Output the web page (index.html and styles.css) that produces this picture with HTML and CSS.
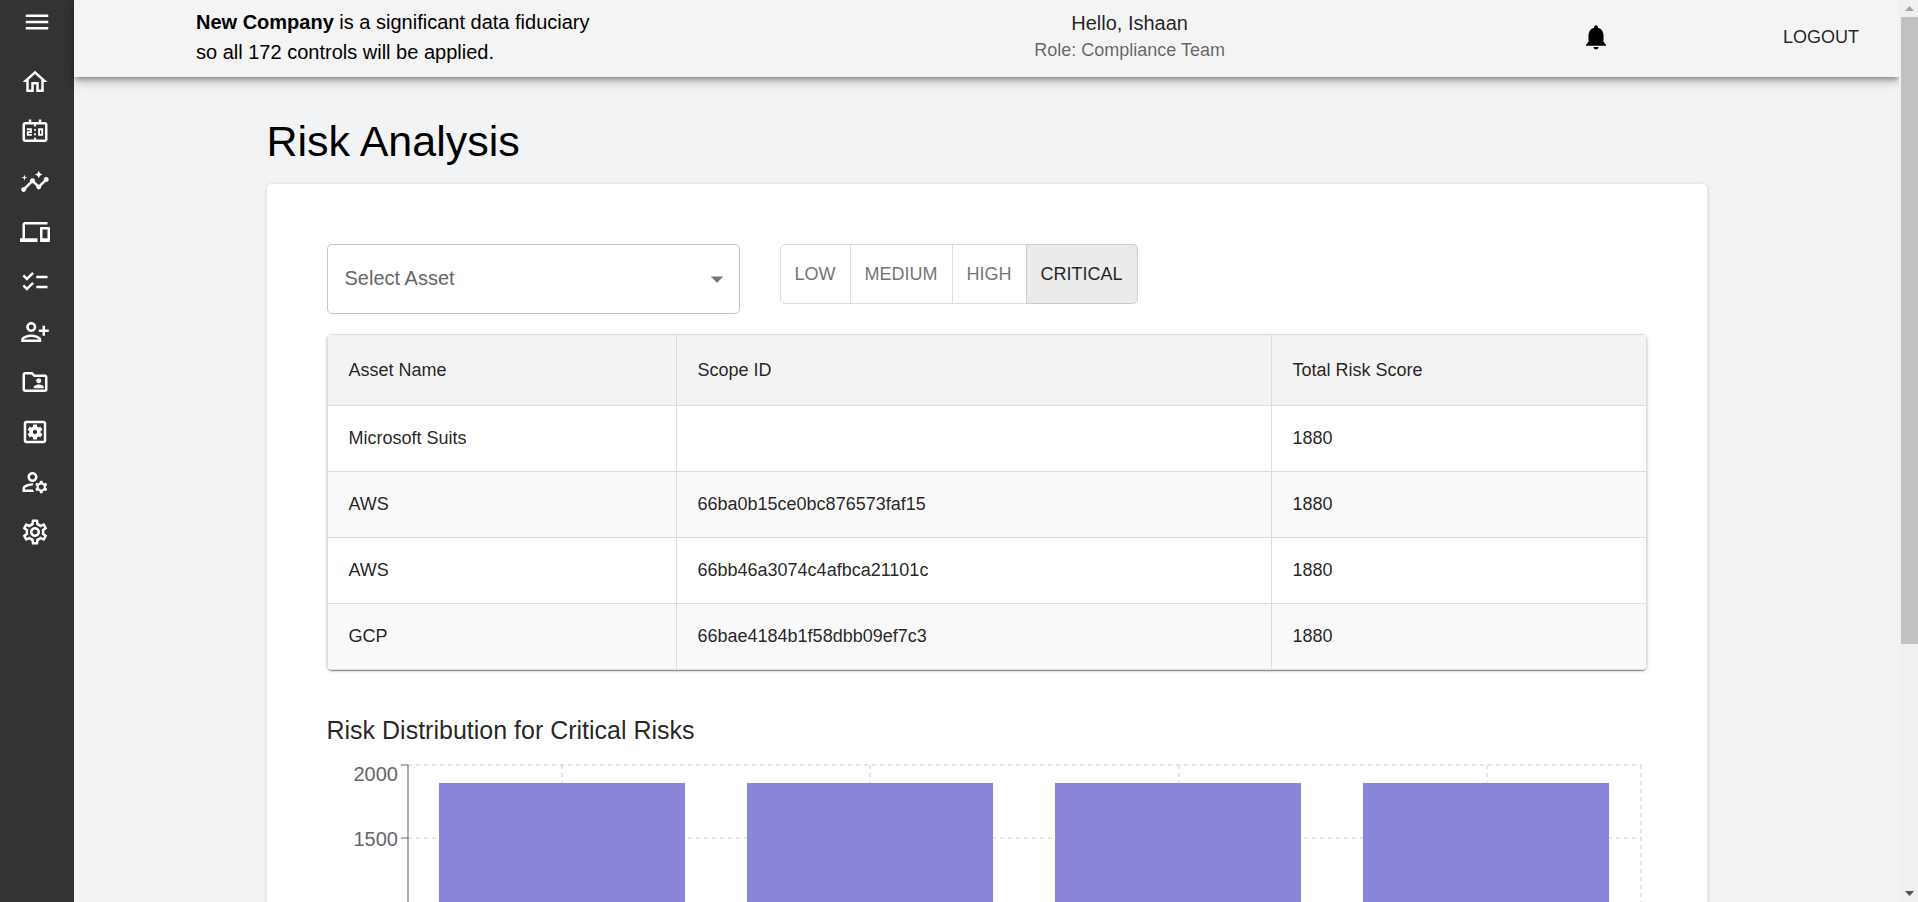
FILE: index.html
```html
<!DOCTYPE html>
<html lang="en">
<head>
<meta charset="utf-8">
<title>Risk Analysis</title>
<link rel="stylesheet" href="styles.css">
</head>
<body>
<div class="app">
  <nav class="sidebar">
    <button class="menu-button" type="button"><svg class="icon" viewBox="0 0 24 24"><path d="M3 18h18v-2H3v2zm0-5h18v-2H3v2zm0-7v2h18V6H3z"/></svg></button>
    <a class="nav-link" href="#"><svg class="icon" viewBox="0 0 24 24"><path d="M12 5.69l5 4.5V18h-2v-6H9v6H7v-7.81l5-4.5M12 3L2 12h3v8h6v-6h2v6h6v-8h3L12 3z"/></svg></a>
    <a class="nav-link" href="#"><svg class="icon" viewBox="0 0 24 24"><path fill-rule="evenodd" d="M20 4h-3V2h-2v2H9V2H7v2H4c-1.1 0-2 .9-2 2v12c0 1.1.9 2 2 2h16c1.1 0 2-.9 2-2V6c0-1.1-.9-2-2-2zM20 18h-7.25v-1.5h-1.500V18H4V6h7.250v1.500h1.500V6H20v12z"/><path fill-rule="evenodd" d="M5.500 9H9.500v3.700H7v.8h2.500V15h-4v-3.700H8v-.8H5.500zM14.500 9h4v6h-4zM16 10.500v3h1v-3zM11.250 9.500h1.500V11h-1.500zM11.250 13h1.500v1.500h-1.500z"/></svg></a>
    <a class="nav-link" href="#"><svg class="icon" viewBox="0 0 24 24"><path d="M21 8c-1.45 0-2.26 1.44-1.93 2.51l-3.55 3.56c-.3-.09-.74-.09-1.04 0l-2.55-2.55C12.27 10.45 11.46 9 10 9c-1.45 0-2.27 1.44-1.93 2.52l-4.56 4.55C2.44 15.74 1 16.55 1 18c0 1.1.9 2 2 2 1.45 0 2.26-1.44 1.93-2.51l4.55-4.56c.3.09.74.09 1.04 0l2.55 2.55C12.73 16.55 13.54 18 15 18c1.45 0 2.27-1.44 1.93-2.52l3.56-3.55c1.07.33 2.51-.48 2.51-1.93 0-1.1-.9-2-2-2z"/><path d="M15 9l.94-2.07L18 6l-2.06-.93L15 3l-.92 2.07L12 6l2.08.93zM3.5 11L4 9l2-.5L4 8l-.5-2L3 8l-2 .5L3 9z"/></svg></a>
    <a class="nav-link" href="#"><svg class="icon" viewBox="0 0 24 24"><path d="M4 6h18V4H4c-1.1 0-2 .9-2 2v11H0v3h14v-3H4V6zm19 2h-6c-.55 0-1 .45-1 1v10c0 .55.45 1 1 1h6c.55 0 1-.45 1-1V9c0-.55-.45-1-1-1zm-1 9h-4v-7h4v7z"/></svg></a>
    <a class="nav-link" href="#"><svg class="icon" viewBox="0 0 24 24"><path d="M22 7h-9v2h9V7zm0 8h-9v2h9v-2zM5.54 11L2 7.46l1.41-1.41 2.12 2.12 4.24-4.24 1.41 1.41L5.54 11zm0 8L2 15.46l1.41-1.41 2.12 2.12 4.24-4.24 1.41 1.41L5.54 19z"/></svg></a>
    <a class="nav-link" href="#"><svg class="icon" viewBox="0 0 24 24"><path d="M13 8c0-2.21-1.79-4-4-4S5 5.79 5 8s1.79 4 4 4 4-1.79 4-4zm-2 0c0 1.1-.9 2-2 2s-2-.9-2-2 .9-2 2-2 2 .9 2 2zM1 18v2h16v-2c0-2.66-5.33-4-8-4s-8 1.34-8 4zm2 0c.2-.71 3.3-2 6-2 2.69 0 5.78 1.28 6 2H3zm17-3v-3h3v-2h-3V7h-2v3h-3v2h3v3h2z"/></svg></a>
    <a class="nav-link" href="#"><svg class="icon" viewBox="0 0 24 24"><path d="M20 6h-8l-2-2H4c-1.1 0-1.99.9-1.99 2L2 18c0 1.1.9 2 2 2h16c1.1 0 2-.9 2-2V8c0-1.1-.9-2-2-2zm0 12H4V6h5.17l2 2H20v10zm-5-5c1.1 0 2-.9 2-2s-.9-2-2-2-2 .9-2 2 .9 2 2 2zm-4 4h8v-1c0-1.33-2.67-2-4-2s-4 .67-4 2v1z"/></svg></a>
    <a class="nav-link" href="#"><svg class="icon" viewBox="0 0 24 24"><path d="M19 3H5c-1.11 0-2 .9-2 2v14c0 1.1.89 2 2 2h14c1.11 0 2-.9 2-2V5c0-1.1-.89-2-2-2zm0 16H5V5h14v14z"/><path fill-rule="evenodd" d="M6.21 13.97l1.2 2.07c.08.13.23.18.37.13l1.49-.6c.31.24.64.44 1.01.59l.22 1.59c.03.14.16.25.31.25h2.4c.15 0 .27-.11.3-.26l.22-1.59c.36-.15.7-.35 1.01-.59l1.49.6c.14.05.29 0 .37-.13l1.2-2.07c.08-.13.04-.29-.07-.39l-1.27-.99c.03-.19.04-.39.04-.58 0-.2-.02-.39-.04-.59l1.27-.99c.11-.09.15-.26.07-.39l-1.2-2.07c-.08-.13-.23-.18-.37-.13l-1.49.6c-.31-.24-.64-.44-1.01-.59l-.22-1.59C13.47 6.11 13.35 6 13.2 6h-2.4c-.15 0-.27.11-.3.26l-.22 1.59c-.36.15-.71.34-1.01.58l-1.49-.6c-.14-.05-.29 0-.37.13l-1.2 2.07c-.08.13-.04.29.07.39l1.27.99c-.03.2-.05.39-.05.59 0 .2.02.39.04.59l-1.27.99c-.11.1-.14.26-.06.39zM12 10.29c.94 0 1.71.77 1.71 1.71s-.77 1.71-1.71 1.71-1.71-.77-1.71-1.71.77-1.71 1.71-1.71z"/></svg></a>
    <a class="nav-link" href="#"><svg class="icon" viewBox="0 0 24 24"><path fill-rule="evenodd" d="M4 18v-.65c0-.34.16-.66.41-.81C6.1 15.53 8.03 15 10 15c.03 0 .05 0 .08.01.1-.7.3-1.37.59-1.98-.22-.02-.44-.03-.67-.03-2.42 0-4.68.67-6.61 1.82-.88.52-1.39 1.5-1.39 2.53V20h9.26c-.42-.6-.75-1.28-.97-2H4zM10 12c2.21 0 4-1.79 4-4s-1.79-4-4-4-4 1.79-4 4 1.79 4 4 4zm0-6c1.1 0 2 .9 2 2s-.9 2-2 2-2-.9-2-2 .9-2 2-2zM20.75 16c0-.22-.03-.42-.06-.63l1.14-1.01-1-1.73-1.45.49c-.32-.27-.68-.48-1.08-.63L18 11h-2l-.3 1.49c-.4.15-.76.36-1.08.63l-1.45-.49-1 1.73 1.14 1.01c-.03.21-.06.41-.06.63s.03.42.06.63l-1.14 1.01 1 1.73 1.45-.49c.32.27.68.48 1.08.63L16 21h2l.3-1.49c.4-.15.76-.36 1.08-.63l1.45.49 1-1.73-1.14-1.01c.03-.21.06-.41.06-.63zM17 18c-1.1 0-2-.9-2-2s.9-2 2-2 2 .9 2 2-.9 2-2 2z"/></svg></a>
    <a class="nav-link" href="#"><svg class="icon" viewBox="0 0 24 24"><path d="M19.43 12.98c.04-.32.07-.64.07-.98 0-.34-.03-.66-.07-.98l2.11-1.65c.19-.15.24-.42.12-.64l-2-3.46c-.09-.16-.26-.25-.44-.25-.06 0-.12.01-.17.03l-2.49 1c-.52-.4-1.08-.73-1.69-.98l-.38-2.65C14.46 2.18 14.25 2 14 2h-4c-.25 0-.46.18-.49.42l-.38 2.65c-.61.25-1.17.59-1.69.98l-2.49-1c-.06-.02-.12-.03-.18-.03-.17 0-.34.09-.43.25l-2 3.46c-.13.22-.07.49.12.64l2.11 1.65c-.04.32-.07.65-.07.98 0 .33.03.66.07.98l-2.11 1.65c-.19.15-.24.42-.12.64l2 3.46c.09.16.26.25.44.25.06 0 .12-.01.17-.03l2.49-1c.52.4 1.08.73 1.69.98l.38 2.65c.03.24.24.42.49.42h4c.25 0 .46-.18.49-.42l.38-2.65c.61-.25 1.17-.59 1.69-.98l2.49 1c.06.02.12.03.18.03.17 0 .34-.09.43-.25l2-3.46c.12-.22.07-.49-.12-.64l-2.11-1.65zm-1.98-1.71c.04.31.05.52.05.73 0 .21-.02.43-.05.73l-.14 1.13.89.7 1.08.84-.7 1.21-1.27-.51-1.04-.42-.9.68c-.43.32-.84.56-1.25.73l-1.06.43-.16 1.13-.2 1.35h-1.4l-.19-1.35-.16-1.13-1.06-.43c-.43-.18-.83-.41-1.23-.71l-.91-.7-1.06.43-1.27.51-.7-1.21 1.08-.84.89-.7-.14-1.13c-.03-.31-.05-.54-.05-.74s.02-.43.05-.73l.14-1.13-.89-.7-1.08-.84.7-1.21 1.27.51 1.04.42.9-.68c.43-.32.84-.56 1.25-.73l1.06-.43.16-1.13.2-1.35h1.39l.19 1.35.16 1.13 1.06.43c.43.18.83.41 1.23.71l.91.7 1.06-.43 1.27-.51.7 1.21-1.07.85-.89.7.14 1.13zM12 8c-2.21 0-4 1.79-4 4s1.79 4 4 4 4-1.79 4-4-1.79-4-4-4zm0 6c-1.1 0-2-.9-2-2s.9-2 2-2 2 .9 2 2-.9 2-2 2z"/></svg></a>
  </nav>

  <div class="page">
    <header class="topbar">
      <p class="notice"><strong>New Company</strong> is a significant data fiduciary<br>so all 172 controls will be applied.</p>
      <div class="user">
        <p class="user-name">Hello, Ishaan</p>
        <p class="user-role">Role: Compliance Team</p>
      </div>
      <button class="bell" type="button"><svg class="icon" viewBox="0 0 24 24"><path d="M12 22c1.1 0 2-.9 2-2h-4c0 1.1.89 2 2 2zm6-6v-5c0-3.07-1.64-5.64-4.5-6.32V4c0-.83-.67-1.5-1.5-1.5s-1.5.67-1.5 1.5v.68C7.63 5.36 6 7.92 6 11v5l-2 2v1h16v-1l-2-2z"/></svg></button>
      <button class="logout" type="button">LOGOUT</button>
    </header>

    <main class="content">
      <h1 class="title">Risk Analysis</h1>
      <section class="card">
        <div class="filters">
          <label class="asset-field">
            <select class="asset-select"><option>Select Asset</option></select>
            <svg class="asset-arrow" viewBox="0 0 24 24"><path d="M7 10l5 5 5-5z"/></svg>
          </label>
          <div class="levels">
            <button class="level" type="button">LOW</button>
            <button class="level" type="button">MEDIUM</button>
            <button class="level" type="button">HIGH</button>
            <button class="level level-active" type="button">CRITICAL</button>
          </div>
        </div>

        <div class="table-frame">
          <table class="risk-table">
            <colgroup><col class="col-asset"><col class="col-scope"><col class="col-score"></colgroup>
            <thead><tr><th>Asset Name</th><th>Scope ID</th><th>Total Risk Score</th></tr></thead>
            <tbody>
              <tr><td>Microsoft Suits</td><td></td><td>1880</td></tr>
              <tr><td>AWS</td><td>66ba0b15ce0bc876573faf15</td><td>1880</td></tr>
              <tr><td>AWS</td><td>66bb46a3074c4afbca21101c</td><td>1880</td></tr>
              <tr><td>GCP</td><td>66bae4184b1f58dbb09ef7c3</td><td>1880</td></tr>
            </tbody>
          </table>
        </div>

        <h2 class="chart-title">Risk Distribution for Critical Risks</h2>
        <svg class="chart" viewBox="0 0 1320 375">
          <g class="grid">
            <path d="M81 6H1314M81 79H1314M81 153H1314M81 227H1314"/>
            <path d="M81 6V300M235 6V300M543 6V300M852 6V300M1160 6V300M1314 6V300"/>
          </g>
          <g class="axis">
            <path d="M81 6V300M74 6H81M74 79H81M74 153H81M74 227H81M74 300H1314"/>
          </g>
          <g class="bars">
            <rect x="112" y="24" width="246" height="276"/>
            <rect x="420" y="24" width="246" height="276"/>
            <rect x="728" y="24" width="246" height="276"/>
            <rect x="1036" y="24" width="246" height="276"/>
          </g>
          <g class="ticks">
            <text x="71" y="22">2000</text>
            <text x="71" y="87">1500</text>
          </g>
        </svg>
      </section>
    </main>
  </div>

  <div class="scrollbar">
    <svg class="scroll-arrow arrow-up" viewBox="0 0 17 17"><path d="M4 11h9L8.500 6z"/></svg>
    <div class="scroll-thumb"></div>
    <div class="scroll-rest"></div>
    <svg class="scroll-arrow" viewBox="0 0 17 17"><path d="M4 6h9l-4.500 5z"/></svg>
  </div>
</div>
</body>
</html>
```
FILE: styles.css
```css
* {
  box-sizing: border-box;
}

body {
  margin: 0;
  font-family: "Liberation Sans", Arial, sans-serif;
  font-size: 20px;
  color: #000;
  background: #f2f3f5;
}

p,
h1,
h2 {
  margin: 0;
  font-weight: 400;
}

button {
  padding: 0;
  border: 0;
  background: none;
  font: inherit;
  color: inherit;
}

.icon {
  display: block;
  width: 30px;
  height: 30px;
  fill: currentColor;
}

.app {
  display: flex;
  height: 100vh;
  overflow: hidden;
}

/* Sidebar */
.sidebar {
  display: flex;
  flex: none;
  flex-direction: column;
  gap: 20px;
  width: 74px;
  padding: 7px 20px;
  background: #333;
  color: #fff;
}

.menu-button {
  margin: 0 0 10px 2px;
  width: 30px;
}

.nav-link {
  color: inherit;
}

/* Top bar */
.page {
  flex: 1;
  min-width: 0;
}

.topbar {
  display: grid;
  grid-template-columns: 654fr 558fr 374fr auto;
  align-items: center;
  padding: 7px 40px 10px 122px;
  background: #f4f4f4;
  box-shadow: 0 3px 5px -1px rgba(0, 0, 0, .3), 0 5px 10px rgba(0, 0, 0, .16), 0 1px 12px rgba(0, 0, 0, .12);
}

.notice {
  line-height: 30px;
}

.user {
  line-height: 27px;
  text-align: center;
}

.user-name {
  color: rgba(0, 0, 0, .87);
}

.user-role {
  font-size: 18px;
  color: rgba(0, 0, 0, .6);
}

.bell {
  justify-self: center;
}

.logout {
  font-size: 18px;
  color: rgba(0, 0, 0, .87);
}

/* Content */
.content {
  max-width: 1440px;
  margin: 0 auto;
  padding-top: 38px;
}

.title {
  margin-bottom: 17px;
  font-size: 43px;
  line-height: 52px;
}

.card {
  padding: 60px;
  border-radius: 5px;
  background: #fff;
  box-shadow: 0 1px 4px rgba(0, 0, 0, .16);
}

.filters {
  display: flex;
  align-items: flex-start;
  gap: 40px;
  margin-bottom: 20px;
}

.asset-field {
  position: relative;
  width: 413px;
}

.asset-select {
  display: block;
  width: 100%;
  height: 70px;
  padding: 0 40px 2px 17px;
  border: 1px solid #c4c4c4;
  border-radius: 5px;
  background: #fff;
  appearance: none;
  font: inherit;
  color: #666;
}

.asset-arrow {
  position: absolute;
  top: 20px;
  right: 8px;
  width: 30px;
  height: 30px;
  fill: #757575;
}

.levels {
  display: flex;
}

.level {
  height: 60px;
  margin-left: -1px;
  padding: 0 14px;
  border: 1px solid #dedede;
  font-size: 18px;
  color: #757575;
}

.level:first-child {
  margin-left: 0;
  border-radius: 5px 0 0 5px;
}

.level:last-child {
  border-radius: 0 5px 5px 0;
}

.level-active {
  border-color: #cacaca;
  background: #ebebeb;
  color: rgba(0, 0, 0, .87);
}

.table-frame {
  overflow: hidden;
  border-radius: 5px;
  box-shadow: 0 2px 1px -1px rgba(0, 0, 0, .3), 0 1px 2px rgba(0, 0, 0, .2), 0 1px 4px rgba(0, 0, 0, .12);
}

.risk-table {
  width: 100%;
  table-layout: fixed;
  border-collapse: collapse;
  font-size: 18px;
  color: rgba(0, 0, 0, .87);
}

.col-asset {
  width: 349px;
}

.col-score {
  width: 375px;
}

.risk-table th,
.risk-table td {
  height: 66px;
  padding: 0 21px;
  border: 1px solid #dcdcdc;
  text-align: left;
  font-weight: 400;
}

.risk-table th {
  height: 71px;
  background: #f3f3f3;
}

.risk-table tbody tr:nth-child(even) {
  background: #f9f9f9;
}

/* Chart */
.chart-title {
  margin: 40px 0 9px;
  font-size: 25px;
  line-height: 40px;
  color: rgba(0, 0, 0, .87);
}

.chart {
  display: block;
  width: 100%;
}

.grid path {
  fill: none;
  stroke: #ccc;
  stroke-dasharray: 4 4;
}

.axis path {
  fill: none;
  stroke: #666;
}

.bars rect {
  fill: #8884d8;
}

.ticks text {
  font-size: 20px;
  text-anchor: end;
  fill: #666;
}

/* Scrollbar */
.scrollbar {
  display: flex;
  flex: none;
  flex-direction: column;
  width: 19px;
  padding-left: 2px;
  background: #f0f0f0;
}

.scroll-arrow {
  display: block;
  width: 17px;
  height: 17px;
  fill: #505050;
}

.arrow-up {
  fill: #a3a3a3;
}

.scroll-thumb {
  flex: 627;
  background: #c1c1c1;
}

.scroll-rest {
  flex: 241;
}
```
